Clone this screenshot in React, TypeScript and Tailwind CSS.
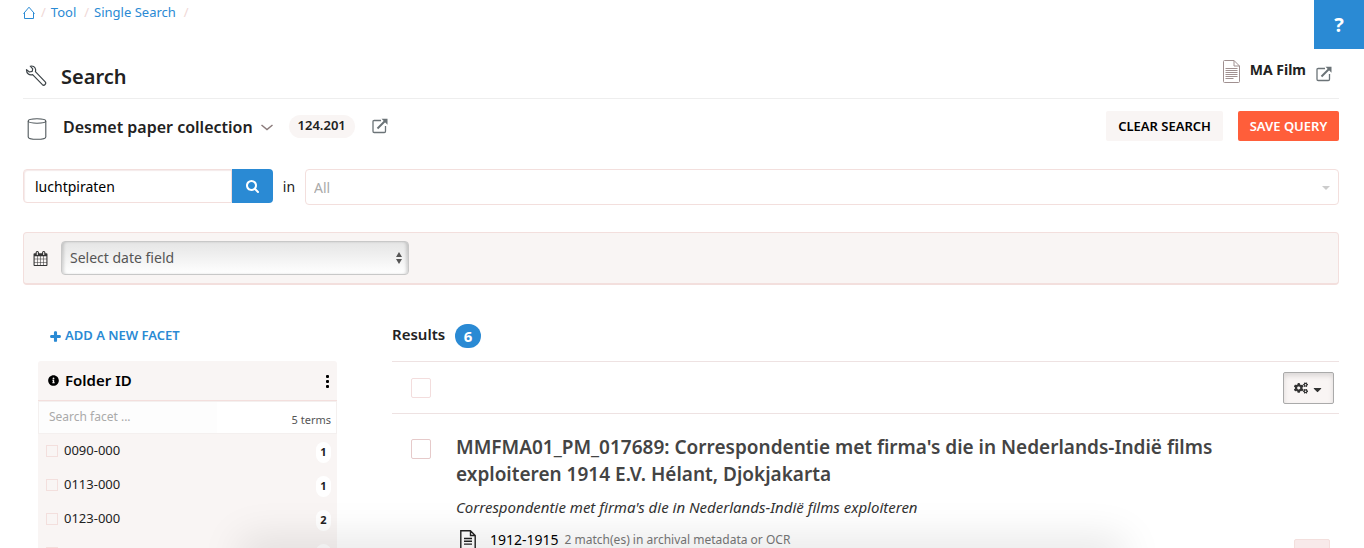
import React from "react";
import { FaCaretDown, FaCogs, FaInfoCircle, FaPlus } from "react-icons/fa";

function HomeIcon() {
  return (
    <svg className="h-[14px] w-[12px]" viewBox="0 0 12 14" fill="none" stroke="#2a8ad4" strokeWidth="1">
      <path d="M1.500 6.500V12.500H10.500V6.500M.5 7.700L6 1.200l5.500 6.500" />
    </svg>
  );
}

function WrenchIcon() {
  return (
    <svg className="size-[22px]" viewBox="0 0 22 22" fill="none" stroke="#3d4448" strokeWidth="1.200" strokeLinejoin="round">
      <path d="M5.300 1.200C7.500.5 10.200 1.800 10.600 4.500c.1.800 0 1.500-.2 2.100l9.800 10.200c1.500 1.800-.9 4.500-2.800 2.900L7.600 9.600C4.600 10.700 1.300 8.500 1.500 4.600L4.400 7l2.800-.6.500-2.600z" />
    </svg>
  );
}

function DatabaseIcon() {
  return (
    <svg className="h-[22px] w-[20px]" viewBox="0 0 20 22" fill="none" stroke="#50585c" strokeWidth="1.100">
      <ellipse cx="10" cy="3" rx="8.800" ry="2.200" />
      <path d="M1.200 3v16c0 1.300 3.500 2.300 8.800 2.300s8.800-1 8.800-2.300V3" />
    </svg>
  );
}

function ExternalIcon() {
  return (
    <svg className="size-[16px]" viewBox="0 0 16 16" fill="none" stroke="#6b7377">
      <path d="M9 2.500H2.200Q1 2.500 1 3.700v9.600q0 1.200 1.200 1.200h10.100q1.200 0 1.200-1.200V8" strokeWidth="1.300" />
      <path d="M5.500 10.500L13 3" strokeWidth="2" />
      <path d="M9.500.8H15.500V6.800z" fill="#6b7377" stroke="none" />
    </svg>
  );
}

function PaperIcon() {
  return (
    <svg className="h-[23px] w-[17px]" viewBox="0 0 17 23" fill="none" stroke="#a09090" strokeWidth="1">
      <path d="M11 .5H1.500q-1 0-1 1v20q0 1 1 1h14q1 0 1-1V6L11 .5v5.500h5.500" />
      <path d="M2.500 8.500h12M2.500 10.500h12M2.500 12.500h12M2.500 14.500h12M2.500 16.500h12M2.500 18.500h8" />
    </svg>
  );
}

function SearchIcon() {
  return (
    <svg className="size-[14px]" viewBox="0 0 1792 1792" fill="currentColor">
      <path d="M1152 832q0-185-131.500-316.500t-316.500-131.500-316.500 131.500-131.500 316.500 131.500 316.500 316.500 131.500 316.500-131.500 131.500-316.500zm512 832q0 52-38 90t-90 38q-54 0-90-38l-343-342q-179 124-399 124-143 0-273.500-55.500t-225-150-150-225-55.500-273.500 55.500-273.500 150-225 225-150 273.500-55.500 273.500 55.500 225 150 150 225 55.500 273.500q0 220-124 399l343 343q37 37 37 90z" />
    </svg>
  );
}

function CalendarIcon() {
  return (
    <svg className="size-[15px] shrink-0" viewBox="0 0 1792 1792" fill="#333">
      <path d="M192 1664h288v-288h-288v288zm352 0h320v-288h-320v288zm-352-352h288v-320h-288v320zm352 0h320v-320h-320v320zm-352-384h288v-288h-288v288zm736 736h320v-288h-320v288zm-384-736h320v-288h-320v288zm768 736h288v-288h-288v288zm-384-352h320v-320h-320v320zm-352-864v-288q0-13-9.500-22.500t-22.500-9.500h-64q-13 0-22.500 9.500t-9.500 22.500v288q0 13 9.500 22.500t22.500 9.500h64q13 0 22.500-9.500t9.500-22.500zm736 864h288v-320h-288v320zm-384-384h320v-288h-320v288zm384 0h288v-288h-288v288zm32-480v-288q0-13-9.500-22.500t-22.500-9.500h-64q-13 0-22.500 9.500t-9.500 22.500v288q0 13 9.500 22.500t22.500 9.500h64q13 0 22.500-9.500t9.500-22.500zm384-64v1280q0 52-38 90t-90 38h-1408q-52 0-90-38t-38-90v-1280q0-52 38-90t90-38h128v-96q0-66 47-113t113-47h64q66 0 113 47t47 113v96h384v-96q0-66 47-113t113-47h64q66 0 113 47t47 113v96h128q52 0 90 38t38 90z" />
    </svg>
  );
}

function FileIcon() {
  return (
    <svg className="h-[20px] w-[16px] shrink-0" viewBox="0 0 16 20" fill="none" stroke="#222" strokeWidth="1.400">
      <path d="M10.500.8H.8v18.400h14.400V5.500L10.500.8v4.700h4.700M4 8.500h8M4 11.300h8M4 14.100h8" />
    </svg>
  );
}

const facets = [
  { name: "0090-000", count: 1 },
  { name: "0113-000", count: 1 },
  { name: "0123-000", count: 2 },
];

function FacetPanel() {
  return (
    <aside className="ml-[15px] w-[299px] shrink-0">
      <button className="ml-3 flex h-[24px] items-center gap-1 text-[13px] font-semibold text-[#2a8ad4]">
        <FaPlus className="size-[11px]" strokeWidth="50" stroke="currentColor" />
        ADD A NEW FACET
      </button>
      <section className="mt-[13px] rounded-t-[3px] bg-[#f9f5f4]">
        <header className="flex h-[40px] items-center border-b border-[#f3dfdd] pr-2 pl-[10px] text-black">
          <FaInfoCircle className="size-[11px]" />
          <h2 className="ml-[6px] flex-1 text-[15px] font-semibold">Folder ID</h2>
          <button aria-label="Facet options" className="flex w-[4px] flex-col items-center gap-[2px] pt-[2px]">
            <i className="size-[3px] rounded-[1px] bg-black" />
            <i className="size-[3px] rounded-[1px] bg-black" />
            <i className="size-[3px] rounded-[1px] bg-black" />
          </button>
        </header>
        <div className="flex h-[33px] border border-[#f4f0ef] bg-white">
          <input
            aria-label="Search facet"
            placeholder="Search facet ..."
            className="w-[178px] bg-[#fdfdfd] pb-[2px] pl-[10px] text-xs text-[#333] outline-none placeholder:text-[#aaa]"
          />
          <span className="ml-auto pt-[10px] pr-[5px] text-[11px] leading-4 text-[#555]">5 terms</span>
        </div>
        <ul>
          {facets.map((facet) => (
            <li key={facet.name} className="flex h-[34px] items-center pr-[6px] pl-2">
              <label className="flex flex-1 items-center gap-[6px] text-[13px] text-[#222]">
                <input type="checkbox" className="size-[12px] appearance-none border border-[#f3dfdd]" />
                {facet.name}
              </label>
              <span className="mt-[3px] flex h-[21px] w-[15px] items-center justify-center rounded-full bg-white text-[11px] font-bold text-[#222]">
                {facet.count}
              </span>
            </li>
          ))}
          <li className="flex h-[34px] items-center justify-between pr-[6px] pl-2">
            <input type="checkbox" aria-label="Next facet term" className="size-[12px] appearance-none border border-[#f3dfdd]" />
            <span className="mt-[3px] h-[21px] w-[15px] rounded-full bg-white" />
          </li>
        </ul>
      </section>
    </aside>
  );
}

function Results() {
  return (
    <main className="ml-[55px] min-w-0 flex-1">
      <h2 className="flex h-[25px] items-start gap-[10px] text-[15px] leading-5 font-semibold text-[#222]">
        Results
        <span className="flex h-[24px] w-[26px] items-center justify-center rounded-full bg-[#2a8ad4] text-[15px] font-bold text-white">
          6
        </span>
      </h2>
      <div className="mt-3 flex h-[53px] items-center justify-between border-y border-[#eee2e2] pr-[5px] pl-[19px]">
        <input type="checkbox" aria-label="Select all results" className="size-5 appearance-none rounded-[2px] border border-[#f3dddd]" />
        <button
          aria-label="Result settings"
          className="flex h-[32px] w-[51px] items-center justify-center gap-[3px] rounded-[2px] border border-[#aaa] bg-[#f9f5f4] text-[#333] shadow-[inset_0_3px_5px_rgba(0,0,0,0.12)]"
        >
          <FaCogs className="size-[14px]" />
          <FaCaretDown className="mt-1 size-[13px]" />
        </button>
      </div>
      <article className="flex pl-[19px]">
        <input type="checkbox" aria-label="Select result" className="mt-[25px] size-5 shrink-0 appearance-none rounded-[2px] border border-[#e6caca]" />
        <div className="ml-[25px] min-w-0 flex-1 pt-5">
          <h3 className="max-w-[800px] text-[19px] leading-[27px] font-semibold text-[#444]">
            MMFMA01_PM_017689: Correspondentie met firma's die in Nederlands-Indië films exploiteren 1914 E.V. Hélant, Djokjakarta
          </h3>
          <p className="mt-[9px] text-[15px] leading-5 text-[#333] italic">
            Correspondentie met firma's die in Nederlands-Indië films exploiteren
          </p>
          <div className="mt-[13px] flex items-start pl-[4px] leading-5">
            <FileIcon />
            <span className="ml-[14px] text-[14px] text-black">1912-1915</span>
            <span className="ml-[6px] text-xs leading-5 text-[#777]">2 match(es) in archival metadata or OCR</span>
            <button aria-label="Open result" className="mt-[9px] mr-[9px] ml-auto h-[30px] w-[36px] rounded-[2px] border border-[#f3dfdd] bg-[#f8eaea]" />
          </div>
        </div>
      </article>
    </main>
  );
}

export default function App() {
  return (
    <div className="relative h-screen overflow-hidden bg-white pr-[25px] pl-[23px] font-['Noto_Sans','Open_Sans',sans-serif] text-[#222]">
      <nav aria-label="Breadcrumb" className="flex h-[25px] items-center gap-[6px] text-[13px] text-[#f0d8d6]">
        <a href="#home" aria-label="Home"><HomeIcon /></a>
        <span>/</span>
        <a href="#tool" className="-ml-px text-[#2a8ad4]">Tool</a>
        <span className="ml-[2px]">/</span>
        <a href="#search" className="-ml-px text-[#2a8ad4]">Single Search</a>
        <span className="ml-[2px]">/</span>
      </nav>
      <button className="absolute top-0 right-0 h-[49px] w-[50px] bg-[#2a8ad4] text-[20px] font-bold text-white">?</button>

      <header className="mt-[29px] flex h-[45px] items-center border-b border-[#eee] pl-[2px]">
        <WrenchIcon />
        <h1 className="ml-[14px] pt-[2px] text-[20px] font-semibold">Search</h1>
        <div className="mr-[7px] ml-auto flex items-center gap-[10px] pb-[10px]">
          <PaperIcon />
          <span className="pb-1 text-[14px] font-bold">MA Film</span>
          <a href="#project" aria-label="Open project" className="pt-[6px]"><ExternalIcon /></a>
        </div>
      </header>

      <div className="mt-3 flex h-[30px] items-center pl-1">
        <div className="pt-[5px]"><DatabaseIcon /></div>
        <button className="ml-4 flex items-center gap-2 pt-[2px] text-[16px] font-semibold">
          Desmet paper collection
          <svg className="h-[7px] w-[12px]" viewBox="0 0 12 7" fill="none" stroke="#8b7b7b" strokeWidth="1.500">
            <path d="M.5 1L6 5.500 11.500 1" />
          </svg>
        </button>
        <span className="ml-4 flex h-[23px] w-[66px] items-center justify-center rounded-full bg-[#f9f5f4] text-[13px] font-semibold">124.201</span>
        <a href="#collection" aria-label="Open collection" className="ml-[17px]"><ExternalIcon /></a>
        <button className="ml-auto h-[30px] w-[117px] rounded-[2px] bg-[#f9f5f4] pt-[2px] text-[13px] font-semibold text-black">CLEAR SEARCH</button>
        <button className="ml-[15px] h-[30px] w-[101px] rounded-[2px] bg-[#ff5e3a] pt-[2px] text-[13px] font-semibold text-white">SAVE QUERY</button>
      </div>

      <form className="mt-7 flex items-start" onSubmit={(event) => event.preventDefault()}>
        <input
          aria-label="Search query"
          defaultValue="luchtpiraten"
          className="h-[34px] w-[209px] rounded-l-[4px] border border-[#f3dfdd] pl-[11px] text-[14px] text-black shadow-[inset_1px_1px_1px_rgba(200,150,150,0.2)] outline-none"
        />
        <button aria-label="Search" className="flex h-[34px] w-[41px] items-center justify-center rounded-r-[4px] bg-[#2a8ad4] text-white">
          <SearchIcon />
        </button>
        <label htmlFor="field" className="w-[32px] text-center text-[14px] leading-[35px]">in</label>
        <div className="relative flex-1">
          <select id="field" className="h-[36px] w-full appearance-none rounded-[4px] border border-[#f3dfdd] bg-white pl-2 text-[14px] text-[#aaa]">
            <option>All</option>
          </select>
          <span className="pointer-events-none absolute top-[17px] right-[9px] border-x-[4px] border-t-[4px] border-x-transparent border-t-[#ccc]" />
        </div>
      </form>

      <section className="mt-[27px] flex h-[53px] items-center gap-[13px] rounded-[4px] border border-b-2 border-[#f3dfdd] bg-[#f9f5f4] pl-[9px]">
        <CalendarIcon />
        <div className="relative w-[348px]">
          <select
            aria-label="Date field"
            className="block h-[34px] w-full appearance-none rounded-[4px] border border-[#c8c8c8] bg-linear-to-b from-[#e5e5e5] to-white pb-[2px] pl-2 text-[14px] text-[#555] shadow-[inset_3px_0_3px_-1px_rgba(0,0,0,0.15),inset_-3px_0_3px_-1px_rgba(0,0,0,0.15)]"
          >
            <option>Select date field</option>
          </select>
          <svg className="pointer-events-none absolute top-[11px] right-[7px] h-[12px] w-[6px]" viewBox="0 0 6 12" fill="#555">
            <path d="M0 5L3 0l3 5zM0 7h6L3 12z" />
          </svg>
        </div>
      </section>

      <div className="mt-[39px] flex items-start">
        <FacetPanel />
        <Results />
      </div>

      <div className="pointer-events-none absolute inset-x-[250px] -bottom-5 h-5 shadow-[0_0_40px_10px_rgba(0,0,0,0.1)]" />
    </div>
  );
}
